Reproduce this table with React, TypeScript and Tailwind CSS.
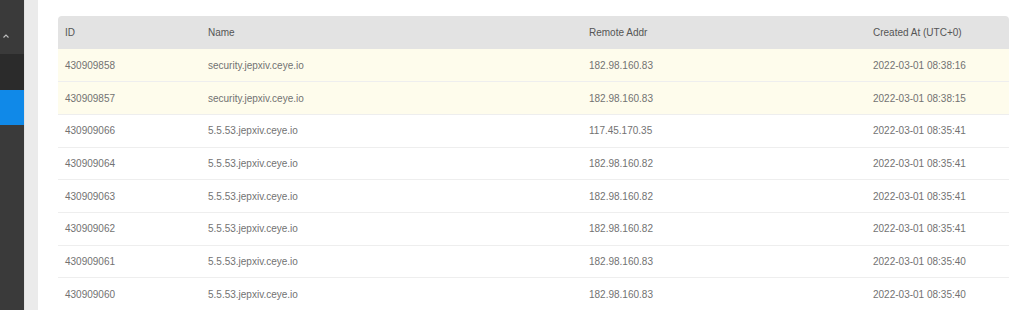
import React from 'react';

type Record = {
  id: string;
  name: string;
  addr: string;
  created: string;
  fresh?: boolean;
};

const records: Record[] = [
  { id: '430909858', name: 'security.jepxiv.ceye.io', addr: '182.98.160.83', created: '2022-03-01 08:38:16', fresh: true },
  { id: '430909857', name: 'security.jepxiv.ceye.io', addr: '182.98.160.83', created: '2022-03-01 08:38:15', fresh: true },
  { id: '430909066', name: '5.5.53.jepxiv.ceye.io', addr: '117.45.170.35', created: '2022-03-01 08:35:41' },
  { id: '430909064', name: '5.5.53.jepxiv.ceye.io', addr: '182.98.160.82', created: '2022-03-01 08:35:41' },
  { id: '430909063', name: '5.5.53.jepxiv.ceye.io', addr: '182.98.160.82', created: '2022-03-01 08:35:41' },
  { id: '430909062', name: '5.5.53.jepxiv.ceye.io', addr: '182.98.160.82', created: '2022-03-01 08:35:41' },
  { id: '430909061', name: '5.5.53.jepxiv.ceye.io', addr: '182.98.160.83', created: '2022-03-01 08:35:40' },
  { id: '430909060', name: '5.5.53.jepxiv.ceye.io', addr: '182.98.160.83', created: '2022-03-01 08:35:40' },
];

const Sidebar: React.FC = () => (
  <aside className="w-[24px] shrink-0 bg-[#3a3a3a] flex flex-col">
    <div className="h-[54px] pt-[34px] pl-[3px]">
      <svg width="6" height="4" viewBox="0 0 6 4" fill="none">
        <path d="M0.5 3.5 L3 1 L5.5 3.5" stroke="#c0c0c0" strokeWidth="1.1" />
      </svg>
    </div>
    <div className="h-[36px] bg-[#2b2b2b]" />
    <div className="h-[35px] bg-[#1089e8]" />
  </aside>
);

const App: React.FC = () => {
  return (
    <div className="flex h-[310px] w-[1024px] overflow-hidden bg-white font-['Liberation_Sans',Arial,sans-serif] text-[10px] text-[#727272]">
      <Sidebar />
      <div className="w-[14px] shrink-0 bg-[#ebebeb] border-l border-[#e2e2e2]" />
      <main className="flex-1 pt-[16px] pl-[20px] pr-[15px]">
        <table className="w-full border-collapse">
          <thead>
            <tr className="bg-[#e3e3e3] text-[#555555] h-[33px] text-left">
              <th className="font-normal pl-[7px] w-[143px] rounded-tl-[4px]">ID</th>
              <th className="font-normal pl-[7px] w-[381px]">Name</th>
              <th className="font-normal pl-[7px] w-[284px]">Remote Addr</th>
              <th className="font-normal pl-[7px] rounded-tr-[4px]">Created At (UTC+0)</th>
            </tr>
          </thead>
          <tbody>
            {records.map((r) => (
              <tr
                key={r.id}
                className={`${r.fresh ? 'bg-[#fefcec]' : 'bg-white'} h-[32.7px] border-b border-[#eeeeee]`}
              >
                <td className="pl-[7px]">{r.id}</td>
                <td className="pl-[7px]">{r.name}</td>
                <td className="pl-[7px]">{r.addr}</td>
                <td className="pl-[7px]">{r.created}</td>
              </tr>
            ))}
          </tbody>
        </table>
      </main>
    </div>
  );
};

export default App;
